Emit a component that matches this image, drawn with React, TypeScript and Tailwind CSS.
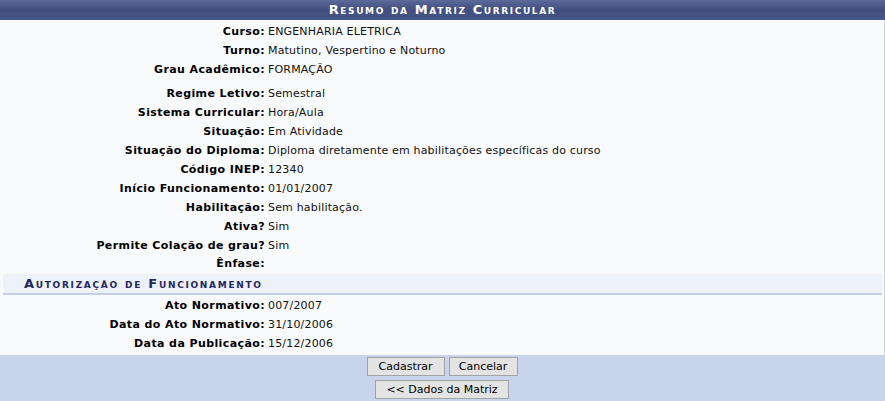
import React from 'react';

interface Row {
  label: string;
  value: string;
  tall?: boolean;
  short?: boolean;
}

const dados: Row[] = [
  { label: 'Curso:', value: 'ENGENHARIA ELETRICA' },
  { label: 'Turno:', value: 'Matutino, Vespertino e Noturno' },
  { label: 'Grau Acadêmico:', value: 'FORMAÇÃO', tall: true },
  { label: 'Regime Letivo:', value: 'Semestral' },
  { label: 'Sistema Curricular:', value: 'Hora/Aula' },
  { label: 'Situação:', value: 'Em Atividade' },
  { label: 'Situação do Diploma:', value: 'Diploma diretamente em habilitações específicas do curso' },
  { label: 'Código INEP:', value: '12340' },
  { label: 'Início Funcionamento:', value: '01/01/2007' },
  { label: 'Habilitação:', value: 'Sem habilitação.' },
  { label: 'Ativa?', value: 'Sim' },
  { label: 'Permite Colação de grau?', value: 'Sim' },
  { label: 'Ênfase:', value: '', short: true },
];

const autorizacao: Row[] = [
  { label: 'Ato Normativo:', value: '007/2007' },
  { label: 'Data do Ato Normativo:', value: '31/10/2006' },
  { label: 'Data da Publicação:', value: '15/12/2006' },
];

const InfoRow: React.FC<{ row: Row }> = ({ row }) => {
  let altura = 'h-[19px]';
  if (row.tall) altura = 'h-[24px] pb-[5px]';
  if (row.short) altura = 'h-[18px] pb-[1px]';
  return (
    <div className={`flex items-center ${altura}`}>
      <span className="w-[265px] shrink-0 text-right font-bold text-black tracking-[0.4px]">{row.label}</span>
      <span className="pl-[3px] text-[#111] tracking-[0.18px]">{row.value}</span>
    </div>
  );
};

const Botao: React.FC<{ children: React.ReactNode; className?: string }> = ({ children, className = '' }) => (
  <button
    className={`h-[19px] px-[9px] bg-[#e3e3e3] border border-[#a3a3a3] text-[11px] leading-none text-black ${className}`}
  >
    {children}
  </button>
);

export default function App() {
  return (
    <div
      className="w-[885px] h-[401px] bg-[#f9fafc] text-[11px] overflow-hidden"
      style={{ fontFamily: '"DejaVu Sans", Verdana, sans-serif' }}
    >
      <div className="h-[20px] flex items-center justify-center bg-gradient-to-b from-[#5d6b9b] via-[#3f4d7f] to-[#485789]">
        <span className="text-white font-bold text-[13px] tracking-[1.6px] [font-variant:small-caps]">
          Resumo da Matriz Curricular
        </span>
      </div>

      <div className="border-r border-[#cfd3da] pt-[3px]">
        {dados.map((r) => (
          <InfoRow key={r.label} row={r} />
        ))}

        <div className="ml-[3px] mr-[2px] h-[21px] flex items-center pl-[21px] bg-[#edf1f8] border-b-2 border-[#c4cfe6]">
          <span className="text-[#26265e] font-bold text-[13px] tracking-[1.7px] [font-variant:small-caps]">
            Autorização de Funcionamento
          </span>
        </div>

        <div className="pt-[2px] pb-[1px]">
          {autorizacao.map((r) => (
            <InfoRow key={r.label} row={r} />
          ))}
        </div>
      </div>

      <div className="h-[46px] bg-[#c8d4ec] border-r border-[#cfd3da] pt-[2px] flex flex-col items-center gap-[4px]">
        <div className="flex gap-[4px]">
          <Botao className="w-[78px]">Cadastrar</Botao>
          <Botao className="w-[69px]">Cancelar</Botao>
        </div>
        <Botao className="w-[134px]">&lt;&lt; Dados da Matriz</Botao>
      </div>
    </div>
  );
}
